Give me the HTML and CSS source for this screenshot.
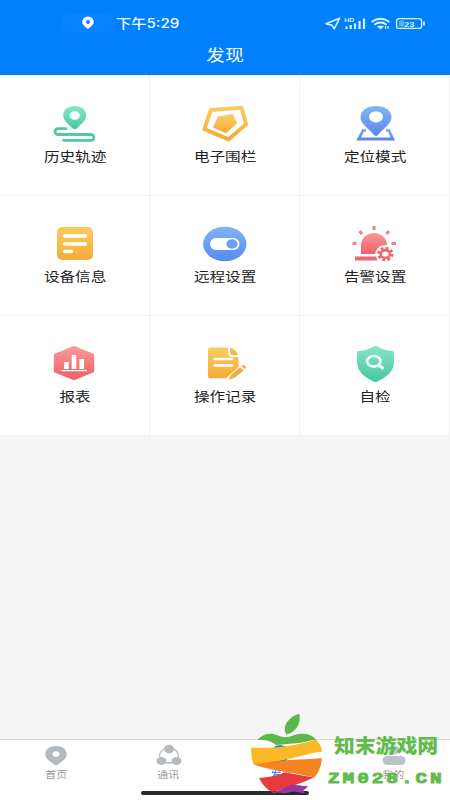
FILE: index.html
```html
<!DOCTYPE html>
<html lang="zh-CN">
<head>
<meta charset="utf-8">
<title>发现</title>
<link rel="stylesheet" href="styles.css">
</head>
<body>
<div class="app">
  <header class="header">
    <div class="status">
      <div class="pill"><svg width="12" height="14" viewBox="0 0 12 14"><path fill="#fff" fill-rule="evenodd" d="M6 .5a5.700 5.500 0 0 1 5.700 5.500c0 3-3.200 4.800-5.700 7C3.500 10.800.3 9 .3 6A5.700 5.500 0 0 1 6 .5zM6 4a2 2 0 1 0 0 4 2 2 0 0 0 0-4z"/></svg></div>
      <span class="time">下午5:29</span>
      <svg class="signals" width="102" height="18" viewBox="324 14 102 18" fill="none" stroke="#d8f4ff">
        <path stroke-width="1.600" stroke-linejoin="round" d="M339.500 18.300 326 23.800l5.800 1.300 2.500 3.600z"/>
        <text class="hd" x="344.300" y="21.500" textLength="10" lengthAdjust="spacingAndGlyphs">HD</text>
        <path stroke-width="2.200" d="M346.500 26.500V29M350.700 25v4M355 23.500V29M359.500 21v8M364 18.500V29"/>
        <path stroke-width="1.900" d="M371.500 22q9-6.500 18 0M374.300 24.700q6.200-4.500 12.400 0"/>
        <path fill="#d8f4ff" stroke="none" d="M377 26.500q3.500-2 7 0l-3.500 3z"/>
        <path stroke-width="1.200" d="M385.500 26v3M388 26v3"/>
        <rect x="396.600" y="18.600" width="25" height="9.800" rx="2.500" stroke-width="1.300"/>
        <rect x="399" y="20.500" width="5" height="6" fill="#5bb0fb" stroke="none"/>
        <path stroke-width="1.700" d="M424 21.500v4"/>
        <text class="battery" x="404" y="26.500" textLength="10.500" lengthAdjust="spacingAndGlyphs">23</text>
      </svg>
    </div>
    <h1 class="title">发现</h1>
  </header>

  <main class="grid">
    <div class="cell">
      <svg class="icon" viewBox="50 103 50 40">
        <defs>
          <linearGradient id="green" x2="0" y2="1"><stop stop-color="#86e6c8"/><stop offset="1" stop-color="#45c8a0"/></linearGradient>
          <linearGradient id="gold" x2="0" y2="1"><stop stop-color="#f7cd62"/><stop offset="1" stop-color="#f5ab38"/></linearGradient>
          <linearGradient id="blue" x2="0" y2="1"><stop stop-color="#80b4f8"/><stop offset="1" stop-color="#5789ec"/></linearGradient>
          <linearGradient id="red" x2="0" y2="1"><stop stop-color="#f59a9c"/><stop offset="1" stop-color="#f35f62"/></linearGradient>
        </defs>
        <path fill="none" stroke="#4fc9a5" stroke-width="2.800" stroke-linecap="round" d="M66 128.700H58a2.900 2.900 0 0 0 0 5.800H91a2.900 2.900 0 0 1 0 5.800H63.500"/>
        <path fill="url(#green)" fill-rule="evenodd" d="M74.700 106c7 0 11.500 4 11.500 9.500 0 5.700-6.500 9.500-9.500 13q-2 1.600-4 0c-3-3.500-9.500-7.300-9.500-13 0-5.500 4.500-9.500 11.500-9.500zm0 5.300a5.200 4.200 0 1 0 0 8.400 5.200 4.200 0 0 0 0-8.400z"/>
      </svg>
      <span class="label">历史轨迹</span>
    </div>
    <div class="cell">
      <svg class="icon" viewBox="200 103 50 40">
        <path fill="none" stroke="url(#gold)" stroke-width="4" stroke-linejoin="round" d="M210.800 110 241.500 107.700 246 124.300 228.700 139.300 204.300 129.200z"/>
        <path fill="url(#gold)" stroke="url(#gold)" stroke-linejoin="round" d="M218 117 232.500 114.500 236.500 123.300 226 132.700 213.500 127.300z"/>
      </svg>
      <span class="label">电子围栏</span>
    </div>
    <div class="cell">
      <svg class="icon" viewBox="350 103 50 40">
        <path fill="none" stroke="url(#blue)" stroke-width="2.800" d="M366 130.500H363L358.700 139H392.800L389 130.500H386"/>
        <path fill="url(#blue)" fill-rule="evenodd" d="M376 106c9 0 15.500 4.500 15.500 11.500 0 6.500-9 11.500-13.500 17.500q-2 2-4 0c-4.500-6-13.500-11-13.500-17.500C360.500 110.500 367 106 376 106zm0 5.200a7 5.600 0 1 0 0 11.200 7 5.600 0 0 0 0-11.200z"/>
      </svg>
      <span class="label">定位模式</span>
    </div>
    <div class="cell">
      <svg class="icon" viewBox="50 223 50 40">
        <rect x="57" y="227" width="36" height="33" rx="5" fill="url(#gold)"/>
        <path stroke="#fff" stroke-width="3.300" stroke-linecap="round" d="M64.500 236H85.500M64.500 244H85.500M64.500 251.500H71.500"/>
      </svg>
      <span class="label">设备信息</span>
    </div>
    <div class="cell">
      <svg class="icon" viewBox="200 223 50 40">
        <ellipse cx="224.800" cy="244" rx="21.700" ry="17.200" fill="url(#blue)"/>
        <rect x="210" y="238" width="29.500" height="12" rx="6" fill="#fff"/>
        <ellipse cx="232" cy="244" rx="5.700" ry="4.700" fill="#6b9ff2"/>
      </svg>
      <span class="label">远程设置</span>
    </div>
    <div class="cell">
      <svg class="icon" viewBox="350 223 50 40">
        <path fill="url(#red)" d="M361 254v-9c0-7 6-12 13-12s13 5 13 12v9z"/>
        <rect x="355" y="256.500" width="22" height="4" fill="#f2666d"/>
        <path stroke="#f28287" stroke-width="3" d="M352.500 243.500h4M391.500 243.500h4.500M359.500 231l2.500 3M389 231l-2.500 3M374 226v4"/>
        <ellipse cx="385.300" cy="254" rx="10" ry="9" fill="#fff"/>
        <ellipse cx="385.300" cy="254" rx="6.700" ry="5.800" fill="none" stroke="#ee656c" stroke-width="3" stroke-dasharray="2.700 2.210"/>
        <ellipse cx="385.300" cy="254" rx="4.600" ry="3.900" fill="none" stroke="#ee656c" stroke-width="2.600"/>
      </svg>
      <span class="label">告警设置</span>
    </div>
    <div class="cell">
      <svg class="icon" viewBox="50 343 50 40">
        <path fill="url(#red)" stroke="url(#red)" stroke-width="3" stroke-linejoin="round" d="M74 347.500 92.700 355.200V371L74 378.500 55.300 371V355.200z"/>
        <path fill="none" stroke="#fff" stroke-width="4.600" d="M66.400 362v7M74 355v14M81.700 359v10"/>
        <path stroke="#fff" stroke-width="1.200" d="M61.500 370.600H87"/>
      </svg>
      <span class="label">报表</span>
    </div>
    <div class="cell">
      <svg class="icon" viewBox="200 343 50 40">
        <path fill="url(#gold)" d="M210 347.500H228v4q0 5.500 5 5.500h5.500v10L226 378.300H210q-2 0-2-2V349.500q0-2 2-2z"/>
        <path fill="url(#gold)" d="M230 347.500q6 1.500 8 7.500h-5q-3 0-3-3z"/>
        <path stroke="#fff" stroke-width="2.300" stroke-linecap="round" d="M214.500 359H232M214.500 365.500H232"/>
        <path fill="#efac43" stroke="#fff" stroke-width=".5" d="M228.300 380.300l2-5 9.500-8 4.500 3.200-10 7.700zM241 366.500l1.500-1.200q1-.8 2 0l1.500 1.200q1 .8 0 1.600l-1.300 1.300z"/>
      </svg>
      <span class="label">操作记录</span>
    </div>
    <div class="cell">
      <svg class="icon" viewBox="350 343 50 40">
        <path fill="url(#green)" d="M374 346.300q1.500-.8 3 0 6 4 15.500 4.700 1.500.2 1.500 1.700V362c0 10-8 15.500-17 19.700q-1.500.7-3 0C365 377.500 357 372 357 362v-9.300q0-1.500 1.500-1.700 9.500-.7 15.500-4.700z"/>
        <ellipse cx="373.800" cy="361.300" rx="6.700" ry="5.300" fill="none" stroke="#fff" stroke-width="2.600"/>
        <path stroke="#fff" stroke-width="3" stroke-linecap="round" d="M379 365.500l3.500 2.500"/>
      </svg>
      <span class="label">自检</span>
    </div>
  </main>

  <nav class="tabs">
    <div class="tab">
      <svg class="tab-icon" viewBox="43 743 26 24"><path fill="#b5babf" fill-rule="evenodd" d="M56 746c6.500 0 10.700 3.500 10.700 8.200 0 5-5.500 7.300-8.700 10.300q-2 1.500-4 0c-3.200-3-8.700-5.300-8.700-10.300C45.300 749.500 49.500 746 56 746zm0 5.200a3.500 2.800 0 1 0 0 5.600 3.500 2.800 0 0 0 0-5.600z"/></svg>
      <span class="tab-label">首页</span>
    </div>
    <div class="tab">
      <svg class="tab-icon" viewBox="156 743 26 24"><ellipse cx="169" cy="755.500" rx="9.500" ry="7.500" fill="none" stroke="#b5babf" stroke-width="1.300"/><g fill="#b5babf"><ellipse cx="169" cy="749" rx="5" ry="4.200"/><ellipse cx="161.500" cy="761" rx="5" ry="4"/><ellipse cx="176.500" cy="761" rx="5" ry="4"/></g></svg>
      <span class="tab-label">通讯</span>
    </div>
    <div class="tab active">
      <svg class="tab-icon" viewBox="268 743 26 24"><ellipse cx="280" cy="754" rx="9.500" ry="9" fill="#087ef5"/></svg>
      <span class="tab-label">发现</span>
    </div>
    <div class="tab">
      <svg class="tab-icon" viewBox="381 743 26 24"><g fill="#bfc1cb"><ellipse cx="394" cy="750" rx="5.500" ry="4.500"/><rect x="382.500" y="756" width="23" height="9" rx="4.500"/></g></svg>
      <span class="tab-label">我的</span>
    </div>
    <div class="home-bar"></div>
  </nav>

  <svg class="watermark" width="200" height="90" viewBox="245 710 200 90">
    <path fill="#58b947" d="M286 734.500c-4-9 2-17 13.300-20.800 1.700 9-2 18-13.300 20.800z"/>
    <path fill="#5bb849" d="M257 740c7-7 14-7.500 21-4.500 6 2.500 10 2 15 0 9-3.500 18-2 23 4l-17 3.500-23 2c-5-4.500-11-5.500-19-5z"/>
    <path fill="#fcb827" d="M251.300 747.500C275 749 298 745 316 739.500q5 5 6.200 12C303 754 290 761 253.500 764.500q-3-8-2.200-17z"/>
    <path fill="#f5831f" d="M254 764.300c13-2.300 24-3.300 36-4.300 11-.5 21-1 31.800-2-.3 7.500-2.800 14-7.500 19.500-18-4.500-30-5.500-42-8q-12-2.200-18.300-5.200z"/>
    <path fill="#e63a3d" d="M259 778q15-1 26-5.500l29 5q-20 9-42 14.500-8-4-13-14z"/>
    <path fill="#9a379c" d="M271 793q10-3 21-8.500l16.300 2-5 4 2 3-11.500-2-9.500 2-6-1-5 1z"/>
    <text class="mark-cn" x="334" y="752.500" textLength="104" lengthAdjust="spacingAndGlyphs">知末游戏网</text>
    <text class="mark-url" transform="translate(328 783) scale(1.300 1)" x="0" y="0" textLength="87.500" lengthAdjust="spacing">ZM028.CN</text>
  </svg>
</div>
</body>
</html>
```
FILE: styles.css
```css
* { box-sizing: border-box; }

body {
  margin: 0;
  font-family: "Noto Sans", "Noto Sans CJK SC", sans-serif;
  background: #f5f5f5;
}

.app {
  position: relative;
  display: flex;
  flex-direction: column;
  width: 450px;
  height: 800px;
  overflow: hidden;
}

.header {
  height: 75px;
  background: #007fff;
  color: #eefaff;
}

.status {
  display: flex;
  align-items: center;
  height: 32px;
  padding: 14px 24px 0 61px;
}

.pill {
  display: flex;
  align-items: center;
  justify-content: center;
  width: 54px;
  height: 18px;
  border-radius: 9px;
  background: #0883ff;
}

.time {
  margin-left: 1px;
  font: 500 13px/18px Inter, "Noto Sans CJK SC", sans-serif;
  white-space: nowrap;
  transform: scaleX(1.17);
  transform-origin: left;
}

.signals { margin-left: auto; }

.hd,
.battery {
  font: bold 6px "Liberation Sans", sans-serif;
  fill: #d8f4ff;
  stroke: none;
}

.battery { font-size: 8px; }

.title {
  margin: 10px 0 0;
  font: 400 16px/24px "Noto Sans CJK SC", sans-serif;
  text-align: center;
  transform: scaleX(1.18);
}

.grid {
  display: grid;
  grid-template-columns: repeat(3, 150px);
  grid-template-rows: 121px 120px 120px;
  margin-bottom: -1px;
}

.cell {
  display: flex;
  flex-direction: column;
  align-items: center;
  padding-top: 27px;
  background: #fff;
  border-right: 1px solid #f1f1f1;
  border-bottom: 1px solid #f1f1f1;
}

.cell:nth-child(-n + 3) { padding-top: 28px; }

.icon {
  width: 50px;
  height: 40px;
}

.label {
  margin-top: 3px;
  padding-left: 1px;
  font: 400 13px/20px "Noto Sans CJK SC", sans-serif;
  color: #222;
  transform: scaleX(1.2);
}

.tabs {
  display: grid;
  grid-template-columns: repeat(4, 1fr);
  grid-template-rows: 51px 4px;
  height: 61px;
  margin-top: auto;
  background: #fff;
  border-top: 1px solid #d9dbdd;
}

.tab {
  display: flex;
  flex-direction: column;
  align-items: center;
  padding-top: 3px;
  color: #999;
}

.tab.active { color: #087ef5; }

.tab-icon {
  width: 26px;
  height: 24px;
}

.tab-label {
  margin-top: -1px;
  font: 400 9.3px/16px "Noto Sans CJK SC", sans-serif;
  transform: scaleX(1.18);
}

.home-bar {
  grid-column: 1 / -1;
  justify-self: center;
  width: 168px;
  height: 4px;
  border-radius: 2px;
  background: #292929;
}

.watermark {
  position: absolute;
  left: 245px;
  top: 710px;
}

.mark-cn {
  font: 900 19px "Noto Sans CJK SC", sans-serif;
  fill: #61bc4b;
}

.mark-url {
  font: bold 15px "Liberation Mono", monospace;
  fill: #61bc4b;
  stroke: #61bc4b;
  stroke-width: .9;
}
```
